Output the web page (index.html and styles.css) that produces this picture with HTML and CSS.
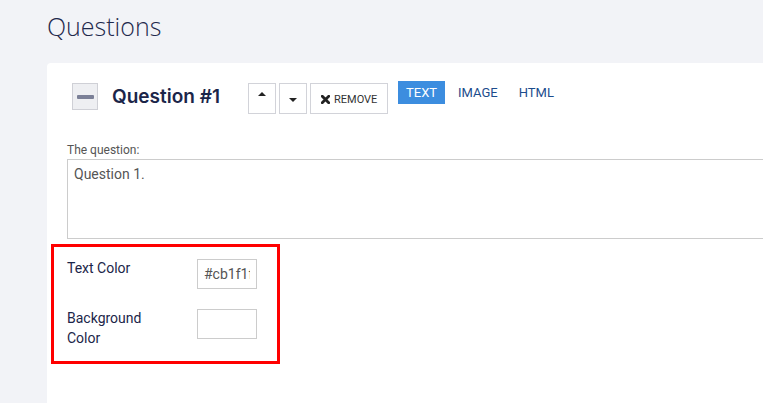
FILE: index.html
```html
<!DOCTYPE html>
<html>
<head>
<meta charset="utf-8">
<link rel="stylesheet" href="styles.css">
</head>
<body>
<div class="page">
  <h1 class="page-title">Questions</h1>
  <div class="card">
    <div class="q-header">
      <button class="collapse" aria-label="collapse"><span class="dash"></span></button>
      <h2 class="q-title">Question #1</h2>
      <div class="q-actions">
        <button class="btn btn-icon up" aria-label="move up">
          <svg width="8" height="4" viewBox="0 0 8 4"><path d="M0 4 L4 0 L8 4 Z" fill="#222"/></svg>
        </button>
        <button class="btn btn-icon down" aria-label="move down">
          <svg width="8" height="4" viewBox="0 0 8 4"><path d="M0 0 L8 0 L4 4 Z" fill="#222"/></svg>
        </button>
        <button class="btn btn-remove">
          <svg width="9" height="9" viewBox="0 0 9 9"><path d="M1.3 1.3 L7.7 7.7 M7.7 1.3 L1.3 7.7" stroke="#222" stroke-width="2.8" stroke-linecap="square"/></svg>
          <span>REMOVE</span>
        </button>
      </div>
      <div class="tabs">
        <span class="tab active">TEXT</span>
        <span class="tab">IMAGE</span>
        <span class="tab">HTML</span>
      </div>
    </div>
    <div class="q-body">
      <label class="field-label">The question:</label>
      <textarea class="q-text">Question 1.</textarea>
    </div>
    <div class="colors">
      <div class="color-label">Text Color</div>
      <input class="color-input" type="text" value="#cb1f1f">
      <div class="color-label">Background<br>Color</div>
      <input class="color-input" type="text" value="">
    </div>
  </div>
</div>
</body>
</html>
```

FILE: styles.css
```css
html, body {
  margin: 0;
  padding: 0;
  overflow: hidden;
  height: 100%;
}
body {
  background: #f2f3f7;
  font-family: Roboto, "Liberation Sans", sans-serif;
}
.page {
  padding: 11px 0 0 47px;
}
.page-title {
  margin: 0 0 22px 0;
  font-family: "Open Sans", "Liberation Sans", sans-serif;
  font-weight: 300;
  font-size: 25px;
  line-height: 30px;
  color: #1f2a4d;
}
.card {
  background: #fff;
  border-radius: 4px 0 0 0;
  padding-top: 20px;
  height: 320px;
  overflow: hidden;
}
.q-header {
  display: flex;
  align-items: flex-start;
  padding-left: 25px;
}
.collapse {
  width: 26px;
  height: 27px;
  box-sizing: border-box;
  border: 1px solid #cfd0d6;
  background: #eeeff2;
  padding: 0;
  margin: 0;
  display: flex;
  align-items: center;
  justify-content: center;
}
.collapse .dash {
  display: block;
  width: 17px;
  height: 4px;
  border-radius: 1px;
  background: #7b8097;
}
.q-title {
  margin: 0 0 0 14px;
  width: 136px;
  flex: none;
  font-family: Inter, "Liberation Sans", sans-serif;
  font-weight: 600;
  font-size: 19px;
  line-height: 27px;
  color: #1b2549;
}
.q-actions {
  display: flex;
  gap: 3px;
}
.btn {
  box-sizing: border-box;
  height: 31px;
  border: 1px solid #d2d3d9;
  background: #fff;
  margin: 0;
  padding: 0;
  font-family: Roboto, "Liberation Sans", sans-serif;
}
.btn-icon {
  width: 28px;
  display: flex;
  justify-content: center;
  align-items: flex-start;
}
.btn-icon svg { display: block; }
.up svg { margin-top: 8px; }
.down svg { margin-top: 14px; }
.btn-remove {
  width: 78px;
  display: flex;
  align-items: center;
  padding-left: 10px;
  gap: 4px;
  font-size: 11px;
  color: #333;
}
.btn-remove svg { display: block; margin-top: 1px; }
.btn-remove span { line-height: 13px; margin-top: 2px; }
.tabs {
  display: flex;
  gap: 5px;
  margin-left: 10px;
  margin-top: -2px;
}
.tab {
  display: block;
  height: 23px;
  line-height: 23px;
  padding: 0 8px;
  font-size: 13px;
  color: #1c4c8c;
}
.tab.active {
  background: #3c8ddf;
  color: #fff;
}
.q-body {
  padding: 28px 0 0 20px;
}
.field-label {
  display: block;
  font-size: 12px;
  line-height: 16px;
  color: #555;
  margin-bottom: 1px;
}
.q-text {
  display: block;
  box-sizing: border-box;
  width: 760px;
  height: 80px;
  border: 1px solid #ccc;
  border-radius: 0;
  padding: 4px 6px;
  margin: 0;
  font-family: Roboto, "Liberation Sans", sans-serif;
  font-size: 14px;
  line-height: 20px;
  color: #555;
  resize: none;
  outline: none;
}
.colors {
  box-sizing: border-box;
  width: 229px;
  margin: 5px 0 0 4px;
  border: 3px solid #ff0000;
  padding: 12px 20px 13px 13px;
  display: grid;
  grid-template-columns: 100px 60px;
  column-gap: 30px;
  row-gap: 20px;
  align-items: start;
}
.color-label {
  font-size: 14px;
  line-height: 20px;
  color: #1b2549;
  margin-top: -1px;
}
.color-input {
  box-sizing: border-box;
  width: 60px;
  height: 30px;
  border: 1px solid #ccc;
  border-radius: 0;
  padding: 0 6px;
  margin: 0;
  font-family: Roboto, "Liberation Sans", sans-serif;
  font-size: 14px;
  color: #555;
  outline: none;
}
```
